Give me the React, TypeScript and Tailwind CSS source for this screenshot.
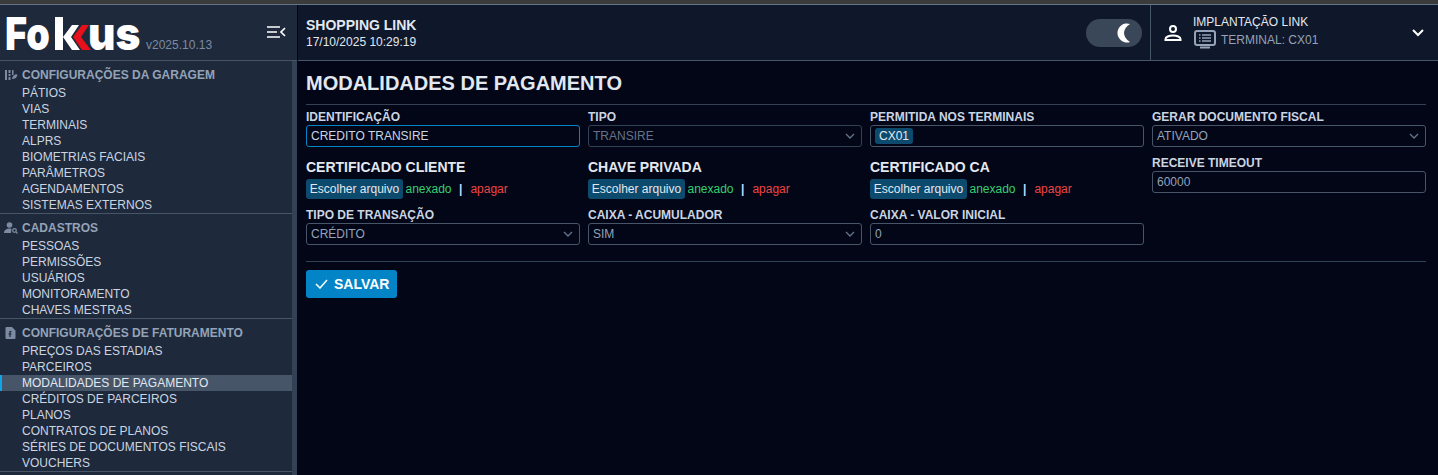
import React from "react";

const font = { fontFamily: '"Liberation Sans", Arial, sans-serif' };

function Group({ icon, title, items, active }: { icon: React.ReactNode; title: string; items: string[]; active?: string }) {
  return (
    <div className="border-b border-[#475569] pt-[5px]">
      <div className="flex items-center h-[18px] pl-[4px]">
        <span className="w-[18px] h-[14px] flex items-center text-[#7c8ba1]">{icon}</span>
        <span className="text-[12px] font-bold text-[#94a3b8]">{title}</span>
      </div>
      <ul className="pt-[1px]">
        {items.map((it) => (
          <li
            key={it}
            className={
              it === active
                ? "h-[16px] leading-[16px] pl-[20px] text-[12px] text-[#e2e8f0] bg-[#475569] border-l-2 border-[#0ea5e9]"
                : "h-[16px] leading-[16px] pl-[22px] text-[12px] text-[#cbd5e1]"
            }
          >
            {it}
          </li>
        ))}
      </ul>
    </div>
  );
}

function Label({ children }: { children: React.ReactNode }) {
  return <div className="h-[14px] leading-[14px] text-[12px] font-bold text-[#cbd5e1]">{children}</div>;
}

function Input({ value, focus, dim }: { value: string; focus?: boolean; dim?: boolean }) {
  return (
    <div
      className={
        "h-[22px] mt-[-1px] rounded-[3px] border px-[4px] leading-[20px] text-[12px] " +
        (focus ? "border-[#0284c7] text-[#cbd5e1]" : "border-[#475569] " + (dim ? "text-[#64748b]" : "text-[#94a3b8]"))
      }
    >
      {value}
    </div>
  );
}

function Select({ value, dim }: { value: string; dim?: boolean }) {
  return (
    <div
      className={
        "h-[22px] mt-[-1px] rounded-[3px] border flex items-center justify-between pl-[4px] pr-[6px] text-[12px] " +
        (dim ? "border-[#334155] text-[#64748b]" : "border-[#475569] text-[#94a3b8]")
      }
    >
      <span>{value}</span>
      <svg width="10" height="6" viewBox="0 0 10 6" fill="none" stroke="#64748b" strokeWidth="1.3">
        <path d="M1 1l4 4 4-4" />
      </svg>
    </div>
  );
}

function FileField({ title }: { title: string }) {
  return (
    <div className="mt-[12px]">
      <div className="h-[16px] leading-[16px] text-[14px] font-bold text-[#e2e8f0]">{title}</div>
      <div className="mt-[4px] flex items-center h-[20px] text-[12px]">
        <span className="h-[20px] leading-[20px] w-[97px] text-center rounded-[3px] bg-[#0c4a6e] text-[#e2e8f0]">Escolher arquivo</span>
        <span className="ml-[2.500px] text-[#33d070]">anexado</span>
        <span className="ml-[7.500px] font-bold text-[#bfdbfe]">|</span>
        <span className="ml-[8px] text-[#ef4444]">apagar</span>
      </div>
    </div>
  );
}

function Lower({ label, children }: { label: string; children: React.ReactNode }) {
  return (
    <div className="mt-[9px]">
      <Label>{label}</Label>
      <div className="mt-[2px]">{children}</div>
    </div>
  );
}

const logoFont = { fontFamily: 'Inter, sans-serif' };

export default function App() {
  return (
    <div style={font} className="w-[1438px] h-[475px] overflow-hidden flex flex-col bg-[#020617]">
      <div className="h-[5px] shrink-0 bg-[#3b3b3b] border-b border-[#64748b]" />
      <div className="flex flex-1 min-h-0">
        <aside className="w-[298px] shrink-0 flex flex-col bg-[#1e293b] border-r border-[#020617]">
          <div className="h-[56px] shrink-0 border-b border-[#475569] flex items-center pl-[6px] relative">
            <div className="flex items-start h-[40px]">
              <span className="block ml-[-1px] w-[50px] text-[46px] leading-[40px] font-black text-white origin-left scale-x-[0.82]" style={logoFont}>Fo</span>
              <svg width="36" height="33" viewBox="0 0 36 33" className="mt-[4px]">
                <rect x="0" y="0" width="8" height="33" fill="#fff" />
                <path d="M17 8h7l-8 12 9 13h-8L8 20z" fill="#fff" />
                <path d="M27 8h7l-8 12 10 13h-9L18 20z" fill="#e8101a" />
              </svg>
              <span className="block ml-[-3px] w-[54px] text-[46px] leading-[40px] font-black text-white origin-left scale-x-[0.92]" style={logoFont}>us</span>
              <span className="ml-[4px] mt-[25px] text-[12px] leading-[14px] text-[#7c8ba1]">v2025.10.13</span>
            </div>
            <svg className="absolute left-[266px] top-[20px]" width="20" height="14" viewBox="0 0 20 14" fill="none" stroke="#fff" strokeWidth="1.7">
              <path d="M1 2h13M1 7h10M1 12h13M19 3l-4 4 4 4" />
            </svg>
          </div>
          <div className="flex flex-1 min-h-0">
            <nav className="flex-1 min-w-0 overflow-hidden">
              <Group
                title="CONFIGURAÇÕES DA GARAGEM"
                icon={
                  <svg width="14" height="12" viewBox="0 0 14 12" fill="currentColor">
                    <path d="M1 1h2v10H1zM4.500 1h2v3h-2zM4.500 5h2v2h-2zM4.500 8h2v3h-2zM8 1h1.500v5H8zM8 10l1-3 3-2 1.500 1-1.500 3-3 1z" />
                  </svg>
                }
                items={["PÁTIOS", "VIAS", "TERMINAIS", "ALPRS", "BIOMETRIAS FACIAIS", "PARÂMETROS", "AGENDAMENTOS", "SISTEMAS EXTERNOS"]}
              />
              <Group
                title="CADASTROS"
                icon={
                  <svg width="14" height="12" viewBox="0 0 14 12" fill="currentColor">
                    <circle cx="5.500" cy="3" r="2.800" />
                    <path d="M0 11c0-3 2.500-4.500 5.500-4.500 1 0 1.500.2 2 .4L7 11z" />
                    <circle cx="10.500" cy="8.500" r="1.800" fill="none" stroke="currentColor" strokeWidth="1.300" />
                    <path d="M12 10l1.500 1.500" stroke="currentColor" strokeWidth="1.300" />
                  </svg>
                }
                items={["PESSOAS", "PERMISSÕES", "USUÁRIOS", "MONITORAMENTO", "CHAVES MESTRAS"]}
              />
              <Group
                title="CONFIGURAÇÕES DE FATURAMENTO"
                active="MODALIDADES DE PAGAMENTO"
                icon={
                  <svg width="11" height="12" viewBox="0 0 11 12" className="ml-[1px]">
                    <path d="M1.500 0H7l3.500 3.500V11a1 1 0 0 1-1 1h-8a1 1 0 0 1-1-1V1a1 1 0 0 1 1-1z" fill="currentColor" />
                    <path d="M6.500 4.500H5v5.500M3.500 7H6.500" stroke="#1e293b" strokeWidth="1.200" fill="none" />
                  </svg>
                }
                items={["PREÇOS DAS ESTADIAS", "PARCEIROS", "MODALIDADES DE PAGAMENTO", "CRÉDITOS DE PARCEIROS", "PLANOS", "CONTRATOS DE PLANOS", "SÉRIES DE DOCUMENTOS FISCAIS", "VOUCHERS"]}
              />
            </nav>
            <div className="w-[5px] shrink-0 bg-[#334155]" />
          </div>
        </aside>

        <div className="flex-1 min-w-0 flex flex-col">
          <header className="h-[56px] shrink-0 bg-[#0f172a] border-b border-[#475569] flex items-center">
            <div className="flex-1 pl-[8px]">
              <div className="text-[14px] leading-[16px] font-bold text-[#e2e8f0]">SHOPPING LINK</div>
              <div className="mt-[2px] text-[12px] leading-[14px] text-[#e2e8f0]">17/10/2025 10:29:19</div>
            </div>
            <div className="w-[56px] h-[28px] rounded-full bg-[#3a4759] mr-[8px] flex items-center justify-end pr-[11px]">
              <svg width="14" height="20" viewBox="0 0 14 20">
                <path d="M13 1A9.500 9.500 0 1 0 13 19C9 16.500 7 13 7 10C7 7 9 3.500 13 1z" fill="#fff" />
              </svg>
            </div>
            <div className="w-[288px] h-full border-l border-[#475569] flex items-center pl-[13px] relative">
              <svg width="18" height="18" viewBox="0 0 18 18" fill="none" stroke="#fff" strokeWidth="2">
                <circle cx="9" cy="5" r="3" />
                <path d="M1.500 16v-1c0-2 3.500-3.500 7.500-3.500s7.500 1.500 7.500 3.500v1z" />
              </svg>
              <div className="ml-[11px]">
                <div className="text-[12px] leading-[14px] text-[#e2e8f0]">IMPLANTAÇÃO LINK</div>
                <div className="flex items-center mt-[1px] ml-[1px]">
                  <svg width="22" height="20" viewBox="0 0 22 20" fill="none" stroke="#94a3b8" strokeWidth="2">
                    <rect x="1" y="1" width="20" height="14" rx="2" />
                    <path d="M5 5h1.500M8 5h9M5 8h1.500M8 8h9M5 11h1.500M8 11h9" strokeWidth="1.400" />
                    <path d="M6 17.500h10" strokeWidth="2" />
                  </svg>
                  <span className="ml-[5px] text-[12px] text-[#94a3b8]">TERMINAL: CX01</span>
                </div>
              </div>
              <svg className="absolute right-[14px] top-[24px]" width="12" height="8" viewBox="0 0 12 8" fill="none" stroke="#fff" strokeWidth="2">
                <path d="M1 1l5 5 5-5" />
              </svg>
            </div>
          </header>

          <main className="flex-1 pl-[8px] pr-[12px] pt-[11px]">
            <h1 className="h-[23px] leading-[23px] text-[20px] font-bold text-[#e2e8f0]">MODALIDADES DE PAGAMENTO</h1>
            <div className="mt-[9px] border-t border-[#334155] pt-[5px] grid grid-cols-4 gap-x-[8px]">
              <div>
                <Label>IDENTIFICAÇÃO</Label>
                <div className="mt-[2px]"><Input value="CREDITO TRANSIRE" focus /></div>
                <FileField title="CERTIFICADO CLIENTE" />
                <Lower label="TIPO DE TRANSAÇÃO"><Select value="CRÉDITO" /></Lower>
              </div>
              <div>
                <Label>TIPO</Label>
                <div className="mt-[2px]"><Select value="TRANSIRE" dim /></div>
                <FileField title="CHAVE PRIVADA" />
                <Lower label="CAIXA - ACUMULADOR"><Select value="SIM" /></Lower>
              </div>
              <div>
                <Label>PERMITIDA NOS TERMINAIS</Label>
                <div className="mt-[1px] h-[22px] rounded-[3px] border border-[#475569] flex items-center pl-[4px]">
                  <span className="h-[16px] leading-[16px] px-[4px] rounded-[3px] bg-[#0c4a6e] text-[12px] text-[#e2e8f0]">CX01</span>
                </div>
                <FileField title="CERTIFICADO CA" />
                <Lower label="CAIXA - VALOR INICIAL"><Input value="0" /></Lower>
              </div>
              <div>
                <Label>GERAR DOCUMENTO FISCAL</Label>
                <div className="mt-[2px]"><Select value="ATIVADO" /></div>
                <div className="mt-[9px]">
                  <Label>RECEIVE TIMEOUT</Label>
                  <div className="mt-[2px]"><Input value="60000" /></div>
                </div>
              </div>
            </div>
            <div className="mt-[16px] border-t border-[#334155] pt-[8px]">
              <button className="w-[91px] h-[28px] rounded-[3px] bg-[#0284c7] flex items-center justify-start pl-[9px] gap-[6px] text-[14px] font-bold text-white">
                <svg width="13" height="10" viewBox="0 0 13 10" fill="none" stroke="#fff" strokeWidth="1.500">
                  <path d="M1 5l4 4 7-8" />
                </svg>
                SALVAR
              </button>
            </div>
          </main>
        </div>
      </div>
    </div>
  );
}
